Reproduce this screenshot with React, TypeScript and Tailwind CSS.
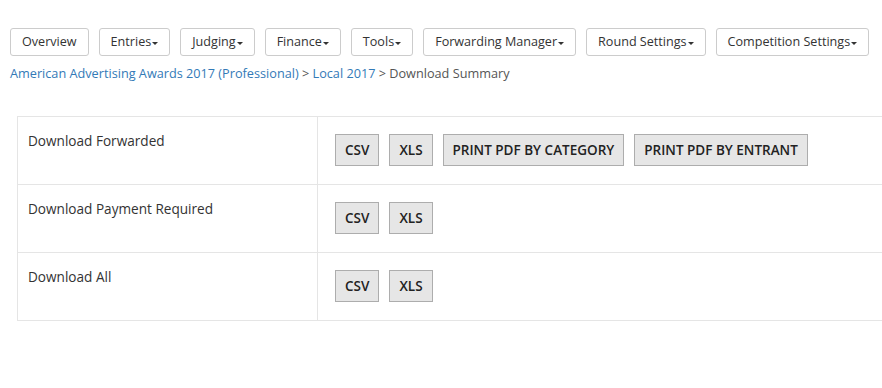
import React from 'react';

const navItems = [
  { label: 'Overview', caret: false },
  { label: 'Entries', caret: true },
  { label: 'Judging', caret: true },
  { label: 'Finance', caret: true },
  { label: 'Tools', caret: true },
  { label: 'Forwarding Manager', caret: true },
  { label: 'Round Settings', caret: true },
  { label: 'Competition Settings', caret: true },
];

const rows = [
  { label: 'Download Forwarded', buttons: ['CSV', 'XLS', 'Print PDF by Category', 'Print PDF by Entrant'] },
  { label: 'Download Payment Required', buttons: ['CSV', 'XLS'] },
  { label: 'Download All', buttons: ['CSV', 'XLS'] },
];

const Caret: React.FC = () => (
  <span className="inline-block w-0 h-0 ml-px mt-[2px] border-t-[3px] border-x-[3px] border-x-transparent border-t-[#333] align-middle" />
);

const App: React.FC = () => {
  return (
    <div className="w-[882px] h-[388px] overflow-hidden bg-white text-[#333] font-['Open_Sans',sans-serif]">
      <div className="pl-[10px] pt-[28px]">
        <div className="flex gap-[10px]">
          {navItems.map((item) => (
            <button
              key={item.label}
              className="shrink-0 whitespace-nowrap h-[28px] px-[11px] bg-white border border-[#ccc] rounded-[3px] text-[12.6px] text-[#333] flex items-center"
            >
              {item.label}
              {item.caret && <Caret />}
            </button>
          ))}
        </div>
        <div className="mt-[7px] text-[12.7px] leading-[20px] text-[#555] whitespace-nowrap">
          <a className="text-[#337ab7]">American Advertising Awards 2017 (Professional)</a>
          {' > '}
          <a className="text-[#337ab7]">Local 2017</a>
          {' > '}
          Download Summary
        </div>
      </div>

      <div className="ml-[17px] mt-[33px]">
        <table className="w-[900px] border-collapse border border-[#e5e5e5] text-[13.6px]">
          <tbody>
            {rows.map((row) => (
              <tr key={row.label} className="h-[68px] border-b border-[#e5e5e5]">
                <td className="w-[300px] align-top pl-[10px] pt-[14px] border-r border-[#e5e5e5] leading-[20px]">
                  {row.label}
                </td>
                <td className="align-top pl-[17px] pt-[17px]">
                  <div className="flex gap-[10px]">
                    {row.buttons.map((b) => (
                      <button
                        key={b}
                        className="whitespace-nowrap h-[32px] px-[9px] bg-[#e6e6e6] border border-[#adadad] text-[13.5px] font-semibold uppercase text-[#222]"
                      >
                        {b}
                      </button>
                    ))}
                  </div>
                </td>
              </tr>
            ))}
          </tbody>
        </table>
      </div>
    </div>
  );
};

export default App;
